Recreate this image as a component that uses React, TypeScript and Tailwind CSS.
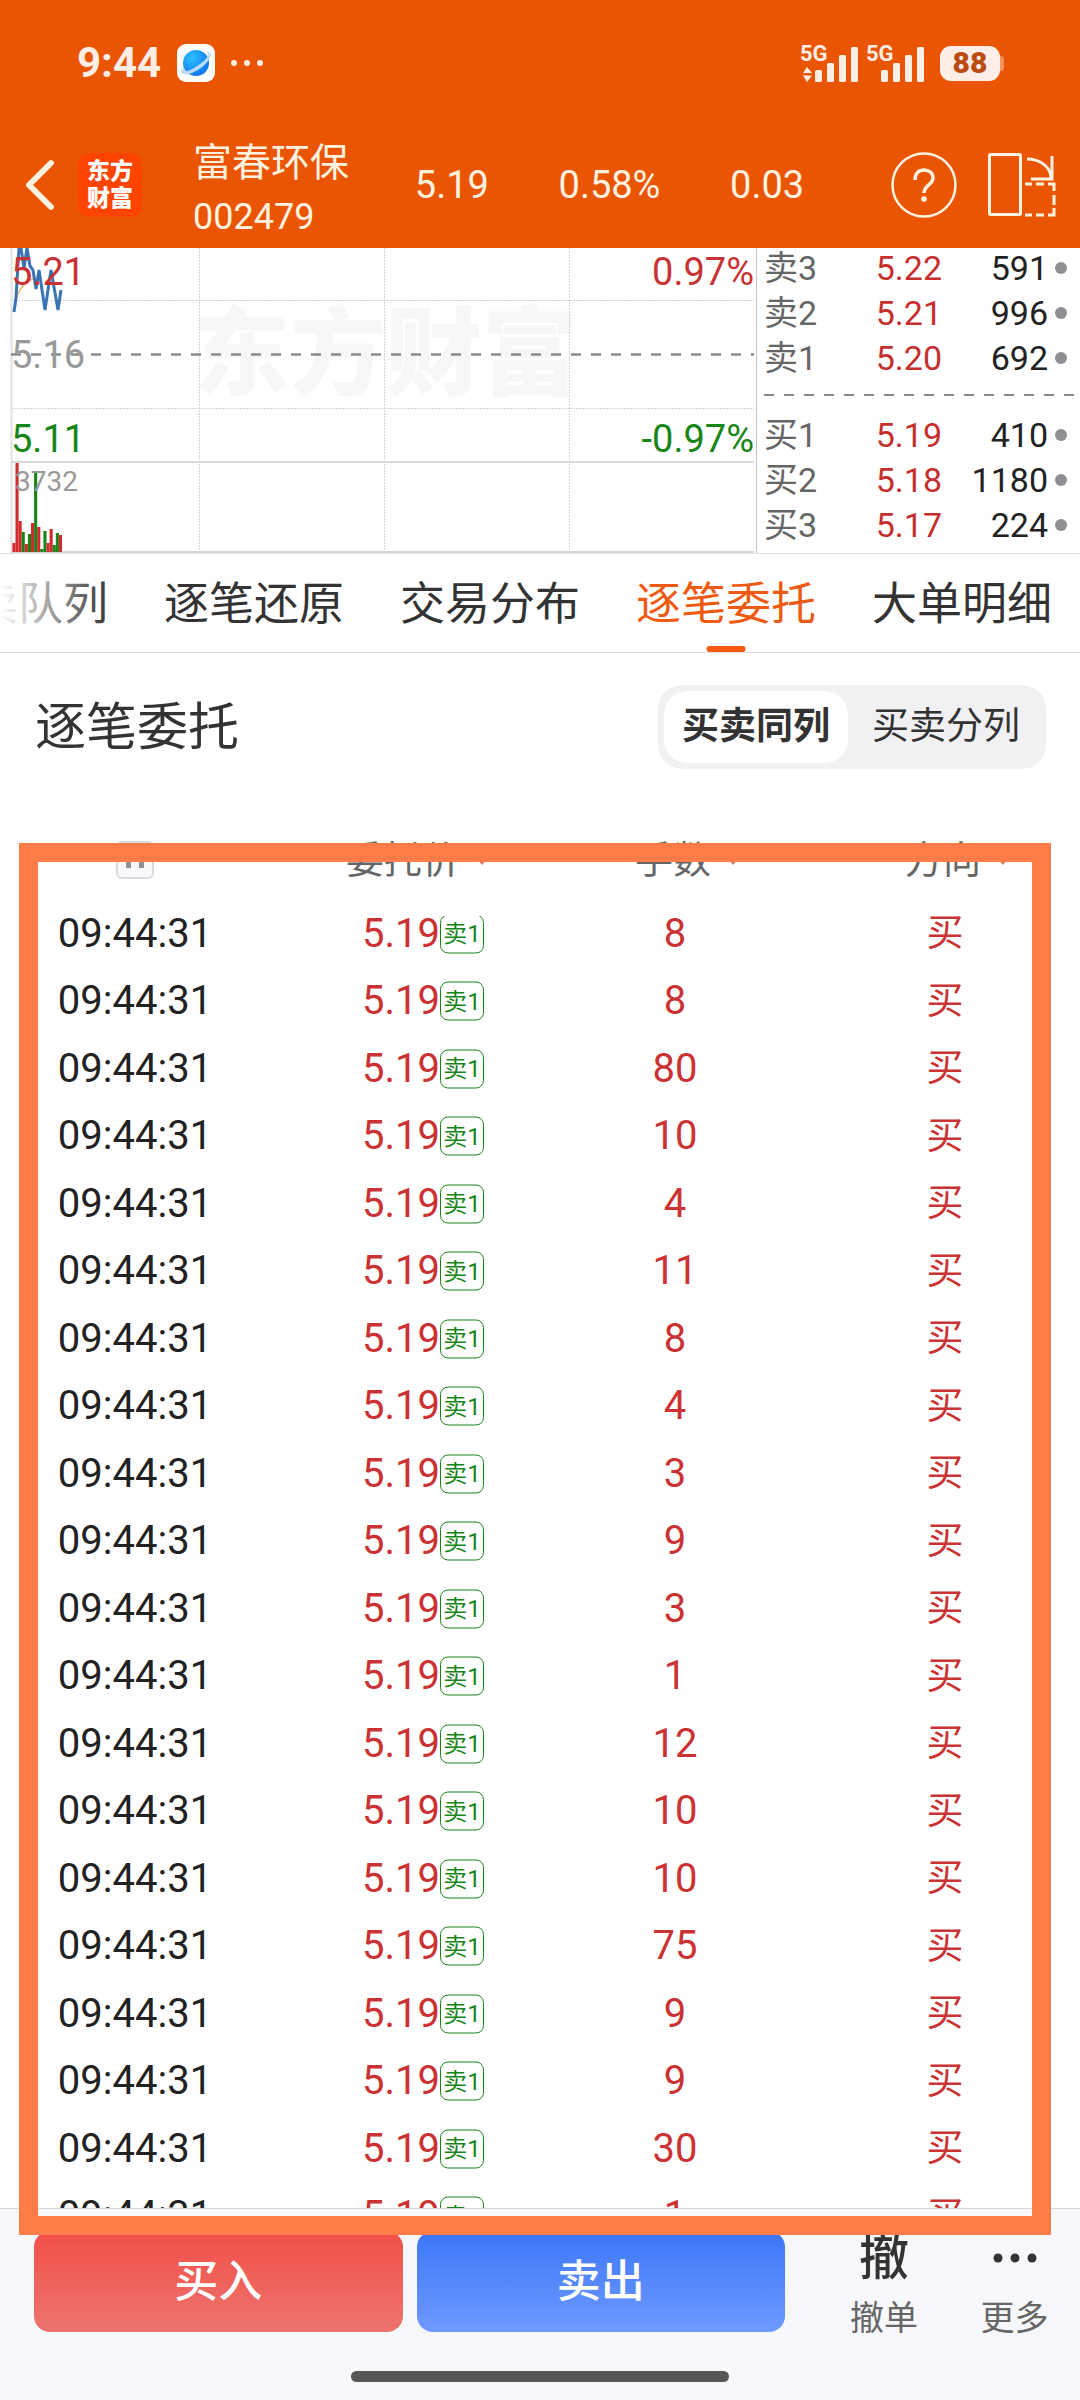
import { ChevronLeft } from "lucide-react";

const book = {
  sell: [
    { label: "卖3", price: "5.22", volume: "591" },
    { label: "卖2", price: "5.21", volume: "996" },
    { label: "卖1", price: "5.20", volume: "692" },
  ],
  buy: [
    { label: "买1", price: "5.19", volume: "410" },
    { label: "买2", price: "5.18", volume: "1180" },
    { label: "买3", price: "5.17", volume: "224" },
  ],
};

const tabs = ["买卖队列", "逐笔还原", "交易分布", "逐笔委托", "大单明细"];
const activeTab = "逐笔委托";

const lots = [8, 8, 80, 10, 4, 11, 8, 4, 3, 9, 3, 1, 12, 10, 10, 75, 9, 9, 30, 1];
const orders = lots.map((amount) => ({ time: "09:44:31", price: "5.19", tag: "卖1", amount, side: "买" }));

const RED = "#d42a2e";
const GREEN = "#178517";

// [height, colour] of each minute's volume
const volumes: [number, string][] = [
  [9, RED], [89, RED], [31, RED], [20, GREEN], [8, RED], [18, GREEN], [29, RED], [79, GREEN],
  [25, RED], [3, GREEN], [21, GREEN], [9, RED], [23, RED], [7, GREEN], [19, GREEN], [17, RED],
];

function StatusBar() {
  return (
    <div className="flex h-[126px] items-center justify-between pl-[77px] pr-[76px] text-[#ffeee4]">
      <div className="flex items-center">
        <span className="text-[42px] font-bold leading-none">9:44</span>
        <svg className="ml-4 h-[38px] w-[38px]" viewBox="0 0 38 38">
          <defs>
            <radialGradient id="planet" cx="0.35" cy="0.3" r="0.8">
              <stop offset="0" stopColor="#2cc0ff" />
              <stop offset="1" stopColor="#0d6fee" />
            </radialGradient>
          </defs>
          <rect width="38" height="38" rx="9" fill="#fff" />
          <circle cx="19" cy="19" r="13" fill="url(#planet)" />
          <path
            d="M29 8C35 7 35 11 31 17C26 24 15 30 9 30.500C3 31 4 26 7 22C6 27 9 28 13 26C20 23 28 17 31 12C32 10 31 8.500 29 8Z"
            fill="#b9dcff"
          />
        </svg>
        <svg className="ml-4 h-2 w-8" viewBox="0 0 32 8" fill="currentColor">
          <circle cx="3" cy="4" r="3" />
          <circle cx="16" cy="4" r="3" />
          <circle cx="29" cy="4" r="3" />
        </svg>
      </div>
      <div className="flex items-center">
        <Signal data />
        <Signal />
        <div className="ml-2 flex items-center">
          <span className="flex h-[35px] w-[60px] items-center justify-center rounded-[11px] bg-[#ffeee8] text-[30px] font-black leading-none text-[#bb4c10]">
            88
          </span>
          <span className="h-[15px] w-1 rounded-r-lg bg-[#f5935f]" />
        </div>
      </div>
    </div>
  );
}

function Signal({ data }: { data?: boolean }) {
  return (
    <div className="relative h-10 w-[66px]">
      <span className="absolute left-0 top-0 text-[22px] font-bold leading-none">5G</span>
      <svg className="h-10 w-[66px]" viewBox="0 0 66 40" fill="currentColor">
        {data && <path d="M7 24L12 30H3ZM3 32.500H12L7 39Z" />}
        <rect x="15" y="27" width="7" height="12" rx="1.500" />
        <rect x="27" y="20" width="7" height="19" rx="1.500" />
        <rect x="39" y="12" width="7" height="27" rx="1.500" />
        <rect x="51" y="4" width="7" height="35" rx="1.500" />
      </svg>
    </div>
  );
}

function Header() {
  return (
    <header className="h-[248px] bg-[#ea5504] text-[#fff3e0]">
      <StatusBar />
      <div className="flex h-[118px] items-center pl-4 pr-6">
        <button aria-label="返回" className="w-[50px]">
          <ChevronLeft className="-ml-5 h-[88px] w-[88px]" strokeWidth={1.6} />
        </button>
        <div className="ml-3 flex h-16 w-16 shrink-0 flex-col items-center justify-center rounded-xl bg-[#ff4400] text-[23px] font-black leading-[27px] text-white">
          <span>东方</span>
          <span>财富</span>
        </div>
        <div className="ml-[51px] flex shrink-0 flex-col pt-2">
          <h1 className="text-[39px] leading-[56px]">富春环保</h1>
          <span className="text-[36px] leading-[52px]">002479</span>
        </div>
        <div className="grid flex-1 grid-cols-3 pl-6 pr-[45px] text-center text-[38px]">
          <span>5.19</span>
          <span>0.58%</span>
          <span>0.03</span>
        </div>
        <button aria-label="帮助" className="shrink-0">
          <svg className="h-[66px] w-[66px]" viewBox="0 0 66 66" fill="none" stroke="currentColor">
            <circle cx="33" cy="33" r="31.500" strokeWidth="2.500" />
            <path d="M24 28C24 21 28 18 33 18C38 18 42 21 42 26C42 33 33 33 33 41" strokeWidth="3.500" />
            <circle cx="33" cy="47" r="2.800" fill="currentColor" stroke="none" />
          </svg>
        </button>
        <button aria-label="横屏" className="ml-[31px] shrink-0">
          <svg className="h-16 w-[68px]" viewBox="0 0 68 64" fill="none" stroke="currentColor" strokeWidth="3">
            <rect x="1.500" y="1.500" width="31" height="60" rx="1" />
            <path d="M39 6C52 6 63 14 63 25M64 3V26H43" />
            <path d="M37 31H44M48 31H56M60 31H66V38M66 42V52M66 55V62H60M56 62H48M44 62H37" />
          </svg>
        </button>
      </div>
    </header>
  );
}

function MinuteChart() {
  return (
    <div className="relative min-w-0 flex-1 border-r border-[#c4c4c4] text-[38px] leading-none">
      <span className="absolute left-[194px] top-[58px] text-[96px] font-black leading-[96px] text-[#f7f7f7]">
        东方财富
      </span>
      <svg className="absolute inset-0 h-full w-full" viewBox="0 0 756 305" preserveAspectRatio="none" fill="none">
        <path d="M11.500 0V305" stroke="#e2e2e2" strokeWidth="2" />
        <path
          d="M12 52.500H754M12 160.500H754M199.500 0V303M384.500 0V303M569.500 0V303"
          stroke="#d4d4d4"
          strokeDasharray="2 1"
        />
        <path d="M11 106.500H754" stroke="#8a8a8a" strokeWidth="2.500" strokeDasharray="10 10" />
        <path d="M11 214H754M11 304H754" stroke="#d8d8d8" strokeWidth="2" />
        <path d="M14 62C16 44 22 36 34 30" stroke="#f3b768" strokeWidth="1.500" />
        <path
          d="M14 64L16 50L19 0L21 0L24 20L27 0L30 18L33 22L36 41L39 22L45 62L51 22L58 62L61 42"
          stroke="#3b74b4"
          strokeWidth="3"
        />
        {volumes.map(([height, color], i) => (
          <rect key={i} x={12.4 + i * 3.1} y={304 - height} width="3.100" height={height} fill={color} />
        ))}
      </svg>
      <span className="absolute left-[11px] top-[5px] text-[#c93235]">5.21</span>
      <span className="absolute left-[11px] top-[88px] text-[#999]">5.16</span>
      <span className="absolute left-[11px] top-[172px] text-[#178517]">5.11</span>
      <span className="absolute right-[2px] top-[5px] text-[#c93235]">0.97%</span>
      <span className="absolute right-[2px] top-[172px] text-[#178517]">-0.97%</span>
      <span className="absolute left-[15px] top-[220px] text-[28px] text-[#999]">3732</span>
    </div>
  );
}

function BookRows({ rows }: { rows: typeof book.sell }) {
  return (
    <>
      {rows.map((row) => (
        <div key={row.label} className="flex h-[45px] items-center pl-[7px] pr-[13px] text-[34px] leading-none">
          <span className="w-[60px] text-[#666]">{row.label}</span>
          <span className="w-[118px] text-right text-[#c5302f]">{row.price}</span>
          <span className="flex-1 text-right text-[#222]">{row.volume}</span>
          <span className="ml-[7px] h-3 w-3 rounded-full bg-[#8f8e94]" />
        </div>
      ))}
    </>
  );
}

function OrderBook() {
  return (
    <div className="w-[323px] shrink-0 overflow-hidden">
      <div className="-mt-[3px]">
        <BookRows rows={book.sell} />
        <svg className="mb-4 mt-[14px] h-[2px] w-full">
          <path d="M7 1H317" stroke="#8a8a8a" strokeWidth="2" strokeDasharray="10 10" />
        </svg>
        <BookRows rows={book.buy} />
      </div>
    </div>
  );
}

function Tabs() {
  return (
    <nav className="relative h-[99px] shrink-0 overflow-hidden border-b border-[#e0e0e0]">
      <div className="-ml-[72px] flex h-full w-max gap-14">
        {tabs.map((tab) => (
          <button
            key={tab}
            className={
              tab === activeTab
                ? "relative pt-[2px] text-[45px] leading-none text-[#ee5a12]"
                : "pt-[2px] text-[45px] leading-none text-[#333]"
            }
          >
            {tab}
            {tab === activeTab && (
              <span className="absolute bottom-0 left-1/2 h-[6px] w-[39px] -translate-x-1/2 rounded-full bg-[#f55a10]" />
            )}
          </button>
        ))}
      </div>
      <div className="pointer-events-none absolute inset-y-0 left-0 w-[110px] bg-linear-to-r from-white to-white/0" />
    </nav>
  );
}

function Caret() {
  return (
    <svg className="absolute left-full top-1/2 ml-4 h-2 w-3" viewBox="0 0 12 8">
      <path d="M2 0H10L6 5Z" fill="#d97b5d" />
    </svg>
  );
}

function OrderTable() {
  return (
    <table className="block min-h-0 flex-1 overflow-hidden">
      <thead className="relative z-10 block bg-white">
        <tr className="grid h-[116px] grid-cols-4 place-items-center pt-1 text-[38px] leading-none text-[#666]">
          <th className="font-normal">
            <button
              aria-label="暂停"
              className="flex h-[38px] w-[38px] items-center justify-center gap-2 rounded-md border-2 border-[#d9dadf] bg-[#f7f8fa]"
            >
              <span className="h-4 w-[5px] bg-[#8f8f94]" />
              <span className="h-4 w-[5px] bg-[#8f8f94]" />
            </button>
          </th>
          {["委托价", "手数", "方向"].map((name) => (
            <th key={name} className="pr-1 font-normal">
              <span className="relative">
                {name}
                <Caret />
              </span>
            </th>
          ))}
        </tr>
      </thead>
      <tbody className="-mt-4 grid h-[1350px] auto-rows-fr">
        {orders.map((order, i) => (
          <tr key={i} className="grid grid-cols-4 place-items-center text-[40px] leading-none text-[#cb3233]">
            <td className="text-[#222]">{order.time}</td>
            <td className="relative pr-2">
              {order.price}
              <span className="absolute left-full top-1/2 -ml-2 flex h-[39px] w-[44px] -translate-y-1/2 items-center justify-center rounded-lg border border-[#178517] text-[24px] text-[#178517]">
                {order.tag}
              </span>
            </td>
            <td>{order.amount}</td>
            <td className="text-[37px]">{order.side}</td>
          </tr>
        ))}
      </tbody>
    </table>
  );
}

function Footer() {
  return (
    <footer className="relative h-[192px] shrink-0 border-t border-[#d5d6da] bg-[#f7f8fb]">
      <div className="flex pl-[34px] pt-[22px]">
        <div className="flex flex-1 gap-[14px] text-[44px] font-medium leading-none text-white">
          <button className="h-[101px] flex-1 rounded-2xl bg-linear-to-b from-[#f24f48] to-[#ec736d]">买入</button>
          <button className="h-[101px] flex-1 rounded-2xl bg-linear-to-b from-[#3b76f8] to-[#6e99ff]">卖出</button>
        </div>
        <button className="ml-[34px] flex w-[130px] flex-col items-center text-[#333]">
          <span className="text-[50px] font-medium leading-[54px]">撤</span>
          <span className="mt-2 text-[34px] leading-[50px] text-[#666]">撤单</span>
        </button>
        <button className="flex w-[131px] flex-col items-center text-[#333]">
          <svg className="h-[54px] w-11" viewBox="0 0 44 54" fill="currentColor">
            <circle cx="5" cy="27" r="4.500" />
            <circle cx="22" cy="27" r="4.500" />
            <circle cx="39" cy="27" r="4.500" />
          </svg>
          <span className="mt-2 text-[34px] leading-[50px] text-[#666]">更多</span>
        </button>
      </div>
      <div className="absolute bottom-[18px] left-1/2 h-[11px] w-[378px] -translate-x-1/2 rounded-full bg-[#555756]" />
    </footer>
  );
}

export default function App() {
  return (
    <div className="relative flex h-screen flex-col overflow-hidden bg-white font-['Roboto','Noto_Sans_CJK_SC',sans-serif]">
      <Header />
      <section className="flex h-[306px] shrink-0 border-b border-[#e2e2e2]">
        <MinuteChart />
        <OrderBook />
      </section>
      <Tabs />
      <div className="flex h-[147px] shrink-0 items-center justify-between pl-[35px] pr-[34px]">
        <h2 className="pt-[2px] text-[51px] leading-none text-[#333]">逐笔委托</h2>
        <div className="flex h-[84px] rounded-3xl bg-[#f1f1f4] p-[6px] text-[37px] leading-none text-[#333]">
          <button className="w-[184px] rounded-3xl bg-white font-bold">买卖同列</button>
          <button className="w-[192px] pl-1">买卖分列</button>
        </div>
      </div>
      <OrderTable />
      <Footer />
      {/* highlight frame over the order list */}
      <div className="pointer-events-none absolute bottom-[165px] left-[19px] right-[29px] top-[843px] z-20 border-[19px] border-[#ff7b47]" />
    </div>
  );
}
